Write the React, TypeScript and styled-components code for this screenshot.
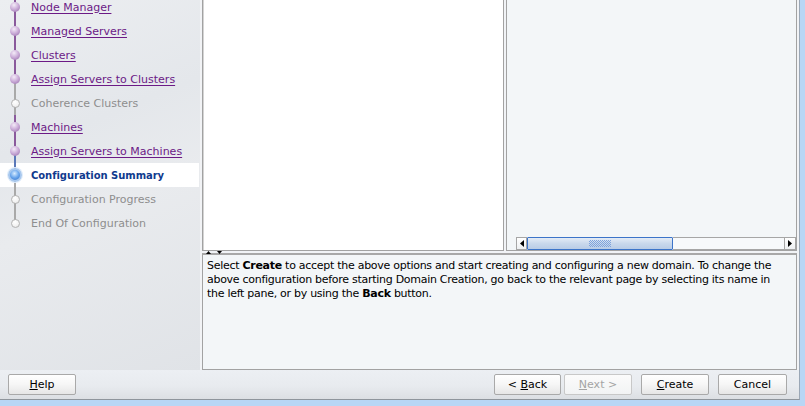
import React from "react";
import styled, { createGlobalStyle, css } from "styled-components";

const GlobalStyle = createGlobalStyle`
  html, body { margin: 0; padding: 0; }
  body {
    background: #b8d6f5;
    font-family: "DejaVu Sans", "Liberation Sans", sans-serif;
    font-size: 11px;
    width: 805px;
    height: 406px;
    overflow: hidden;
  }
`;

type StepState = "visited" | "current" | "todo";

const LINE = {
  visited: "#8a5a9c",
  current: "#5a78b8",
  todo: "#a9a9a9",
};

const Window = styled.div`
  width: 800px;
  height: 400px;
  box-sizing: border-box;
  border-bottom: 1px solid #8f959c;
  border-right: 1px solid #9aa7b6;
  display: flex;
  flex-direction: column;
  background: #eceef1;
`;

const Main = styled.div`
  height: 370px;
  display: flex;
`;

const Nav = styled.nav`
  width: 200px;
  flex: none;
  overflow: hidden;
  border-right: 1px solid #f2f3f5;
  background: linear-gradient(158deg, #eceef1 0%, #e4e7eb 35%, #e9ebee 55%, #e0e3e7 100%);
`;

const StepList = styled.ul`
  list-style: none;
  margin: -5px 0 0 0;
  padding: 0;
`;

const StepRow = styled.li<{ $current?: boolean }>`
  height: 24px;
  display: flex;
  align-items: center;
  width: 199px;
  background: ${(p) => (p.$current ? "#ffffff" : "transparent")};
`;

const Marker = styled.div<{ $top: string; $bottom: string | null }>`
  position: relative;
  width: 31px;
  height: 24px;
  flex: none;
  &::before {
    content: "";
    position: absolute;
    left: 14px;
    top: 0;
    width: 2px;
    height: 12px;
    background: ${(p) => p.$top};
  }
  &::after {
    content: "";
    position: absolute;
    left: 14px;
    top: 12px;
    width: 2px;
    height: 12px;
    background: ${(p) => p.$bottom ?? "transparent"};
  }
`;

const Bullet = styled.span<{ $state: StepState }>`
  position: absolute;
  z-index: 1;
  border-radius: 50%;
  box-sizing: border-box;
  ${(p) =>
    p.$state === "visited"
      ? css`
          left: 10px;
          top: 7px;
          width: 10px;
          height: 10px;
          background: radial-gradient(circle at 40% 30%, #f4ecf8 0%, #cdb0da 45%, #9468a8 100%);
        `
      : p.$state === "current"
      ? css`
          left: 8px;
          top: 5px;
          width: 14px;
          height: 14px;
          border: 2px solid #a8c8ee;
          background: radial-gradient(circle at 45% 35%, #d8ecff 0%, #6aa6ec 50%, #2d6cc8 100%);
          box-shadow: 0 0 0 1px #e0ecfa;
        `
      : css`
          left: 11px;
          top: 8px;
          width: 9px;
          height: 9px;
          border: 1px solid #b4b4b4;
          background: radial-gradient(circle at 40% 30%, #ffffff 0%, #f2f2f2 60%, #d8d8d8 100%);
        `}
`;

const StepLabel = styled.span<{ $state: StepState }>`
  white-space: nowrap;
  font-size: 11px;
  ${(p) =>
    p.$state === "visited"
      ? css`
          color: #6c1a86;
          text-decoration: underline;
          text-underline-offset: 2px;
        `
      : p.$state === "current"
      ? css`
          color: #0f3a8e;
          font-weight: bold;
          font-size: 10px;
          letter-spacing: -0.05px;
        `
      : css`
          color: #8e8e8e;
        `}
`;

const Content = styled.div`
  flex: 1;
  display: flex;
  flex-direction: column;
  padding: 0 2px 0 1px;
  background: #f1f3f6;
`;

const TopSplit = styled.div`
  height: 251px;
  display: flex;
  gap: 2px;
`;

const WhitePane = styled.div`
  width: 302px;
  box-sizing: border-box;
  background: #ffffff;
  border: 1px solid #a2a2a2;
  border-top: none;
  box-shadow: inset 1px 0 0 #d4d4d4;
`;

const DetailPane = styled.div`
  flex: 1;
  box-sizing: border-box;
  background: #f3f6f8;
  border: 1px solid #a2a2a2;
  border-top: none;
  display: flex;
  flex-direction: column;
  justify-content: flex-end;
`;

const HScroll = styled.div`
  margin-left: 9px;
  height: 13px;
  display: flex;
`;

const ScrollButton = styled.div<{ $w: number }>`
  width: ${(p) => p.$w}px;
  flex: none;
  box-sizing: border-box;
  border: 1px solid #a6a6a6;
  background: linear-gradient(#ffffff, #eef0f2);
  display: flex;
  align-items: center;
  justify-content: center;
`;

const Thumb = styled.div`
  width: 146px;
  flex: none;
  box-sizing: border-box;
  border: 1px solid #3c74c9;
  border-radius: 1px;
  background: linear-gradient(#e4ecf6 0%, #c9d8ec 50%, #b9cce6 100%);
  display: flex;
  align-items: center;
  justify-content: center;
`;

const Grip = styled.div`
  width: 22px;
  height: 7px;
  background: repeating-conic-gradient(#7ea2dc 0 25%, transparent 0 50%) 0 0 / 2px 2px;
`;

const Track = styled.div`
  flex: 1;
  box-sizing: border-box;
  border-top: 1px solid #a6a6a6;
  border-bottom: 1px solid #a6a6a6;
  background: #f7f9fb;
`;

const Splitter = styled.div`
  height: 2px;
  display: flex;
  gap: 6px;
  padding-left: 4px;
  background: #f1f3f6;
  position: relative;
  z-index: 2;
`;

const SplitArrow = styled.svg`
  width: 5px;
  height: 3px;
  margin-top: 0px;
`;

const BottomPane = styled.div`
  flex: 1;
  box-sizing: border-box;
  background: #f3f6f8;
  border: 1px solid #a2a2a2;
  border-top: 2px solid #a8a8a8;
  padding: 4px 4px 0 4px;
  font-size: 11px;
  line-height: 14px;
  color: #000;
  letter-spacing: -0.28px;
  white-space: nowrap;
`;

const ButtonBar = styled.div`
  flex: 1;
  display: flex;
  align-items: center;
  padding: 0 12px 1px 8px;
  background: linear-gradient(#eceff3 0%, #e8ebef 55%, #dcdfe3 100%);
`;

const ButtonGroup = styled.div`
  margin-left: auto;
  display: flex;
  gap: 9px;
`;

const NavGroup = styled.div`
  display: flex;
  gap: 3px;
`;

const Button = styled.button<{ $w: number }>`
  width: ${(p) => p.$w}px;
  height: 21px;
  box-sizing: border-box;
  border: 1px solid #a9a9a9;
  border-radius: 2px;
  background: linear-gradient(#ffffff 0%, #f6f6f6 50%, #e6e6e6 100%);
  font-family: "DejaVu Sans", "Liberation Sans", sans-serif;
  font-size: 11px;
  color: #000;
  padding: 0;
  margin: 0;
  &:disabled {
    color: #a4a4a4;
    border-color: #c8c8c8;
    background: linear-gradient(#fbfbfb 0%, #f2f3f4 100%);
  }
`;

const Mnemonic = styled.span`
  text-decoration: underline;
  text-underline-offset: 1px;
`;

const steps: { label: string; state: StepState }[] = [
  { label: "Node Manager", state: "visited" },
  { label: "Managed Servers", state: "visited" },
  { label: "Clusters", state: "visited" },
  { label: "Assign Servers to Clusters", state: "visited" },
  { label: "Coherence Clusters", state: "todo" },
  { label: "Machines", state: "visited" },
  { label: "Assign Servers to Machines", state: "visited" },
  { label: "Configuration Summary", state: "current" },
  { label: "Configuration Progress", state: "todo" },
  { label: "End Of Configuration", state: "todo" },
];

export default function App() {
  return (
    <>
      <GlobalStyle />
      <Window>
        <Main>
          <Nav>
            <StepList>
              {steps.map((s, i) => {
                const next = steps[i + 1];
                const top = s.state === "current" ? LINE.current : s.state === "todo" ? LINE.todo : LINE.visited;
                let bottom: string | null = null;
                if (next) {
                  bottom = next.state === "todo" || s.state === "todo" ? LINE.todo : next.state === "current" ? LINE.current : LINE.visited;
                }
                return (
                  <StepRow key={s.label} $current={s.state === "current"}>
                    <Marker $top={top} $bottom={bottom}>
                      <Bullet $state={s.state} />
                    </Marker>
                    <StepLabel $state={s.state}>{s.label}</StepLabel>
                  </StepRow>
                );
              })}
            </StepList>
          </Nav>
          <Content>
            <TopSplit>
              <WhitePane />
              <DetailPane>
                <HScroll>
                  <ScrollButton $w={11}>
                    <svg width="4" height="7" viewBox="0 0 4 7">
                      <path d="M4 0 L0 3.5 L4 7 Z" fill="#000" />
                    </svg>
                  </ScrollButton>
                  <Thumb>
                    <Grip />
                  </Thumb>
                  <Track />
                  <ScrollButton $w={12}>
                    <svg width="4" height="7" viewBox="0 0 4 7">
                      <path d="M0 0 L4 3.5 L0 7 Z" fill="#000" />
                    </svg>
                  </ScrollButton>
                </HScroll>
              </DetailPane>
            </TopSplit>
            <Splitter>
              <SplitArrow viewBox="0 0 5 3">
                <path d="M0 3 L2.5 0 L5 3 Z" fill="#000" />
              </SplitArrow>
              <SplitArrow viewBox="0 0 5 3">
                <path d="M0 0 L2.5 3 L5 0 Z" fill="#000" />
              </SplitArrow>
            </Splitter>
            <BottomPane>
              Select <b>Create</b> to accept the above options and start creating and configuring a new domain. To change the
              <br />
              above configuration before starting Domain Creation, go back to the relevant page by selecting its name in
              <br />
              the left pane, or by using the <b>Back</b> button.
            </BottomPane>
          </Content>
        </Main>
        <ButtonBar>
          <Button $w={68}>
            <Mnemonic>H</Mnemonic>elp
          </Button>
          <ButtonGroup>
            <NavGroup>
              <Button $w={67}>
                &lt; <Mnemonic>B</Mnemonic>ack
              </Button>
              <Button $w={68} disabled>
                <Mnemonic>N</Mnemonic>ext &gt;
              </Button>
            </NavGroup>
            <Button $w={68}>
              <Mnemonic>C</Mnemonic>reate
            </Button>
            <Button $w={69}>Cancel</Button>
          </ButtonGroup>
        </ButtonBar>
      </Window>
    </>
  );
}
